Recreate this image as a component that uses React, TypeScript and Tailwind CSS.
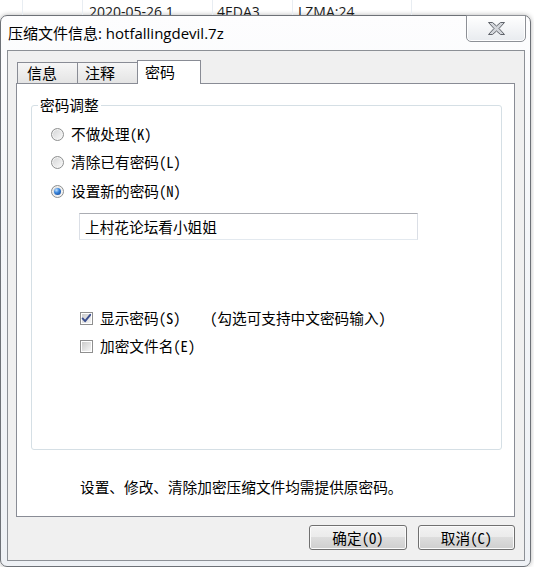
const sim =
	"font-['Noto_Sans_Mono_CJK_SC','Noto_Sans_CJK_SC',monospace] text-[14.67px] leading-[16px] text-black";

function Radio({ label, checked }: { label: string; checked?: boolean }) {
	return (
		<div className="flex h-[28px] items-center pl-[19px]">
			<span className="flex h-[13px] w-[13px] shrink-0 items-center justify-center rounded-full border border-[#8e9090] bg-[linear-gradient(135deg,#d2d3d4,#fbfbfb)] shadow-[inset_0_0_0_1px_#f4f4f4]">
				{checked && (
					<span className="h-[7px] w-[7px] rounded-full bg-[radial-gradient(circle_at_35%_30%,#c4e2ff_0%,#3a86dc_40%,#0c3c8c_100%)]" />
				)}
			</span>
			<span className="ml-[7px] whitespace-pre">{label}</span>
		</div>
	);
}

function Check({ checked }: { checked?: boolean }) {
	return (
		<span className="flex h-[13px] w-[13px] shrink-0 border border-[#8f8f8f] bg-white p-px">
			<span className="flex h-full w-full items-center justify-center overflow-visible bg-[linear-gradient(135deg,#cbcbcb,#f6f6f6)]">
				{checked && (
					<svg width="11" height="11" viewBox="0 0 11 11" className="overflow-visible">
						<path
							d="M1.6 5.4 L4.1 8.2 L9.2 1.8"
							fill="none"
							stroke="#3b4f8f"
							strokeWidth="1.9"
							strokeLinecap="round"
							strokeLinejoin="round"
						/>
					</svg>
				)}
			</span>
		</span>
	);
}

function Button({ children, w }: { children: string; w: string }) {
	return (
		<button
			type="button"
			className={`${w} flex h-[25px] items-center justify-center rounded-[3px] border border-[#707070] bg-[linear-gradient(#f2f2f2_0%,#ebebeb_49%,#dddddd_50%,#cfcfcf_100%)] shadow-[inset_0_0_0_1px_#fbfbfb] ${sim}`}
		>
			{children}
		</button>
	);
}

export default function App() {
	return (
		<div className="h-[567px] w-[534px] overflow-hidden bg-white">
			{/* list behind the dialog, cut by the window's top edge */}
			<div className="flex h-[15px] overflow-hidden whitespace-nowrap font-['Segoe_UI','Open_Sans',sans-serif] text-[14px] leading-[16px] text-[#1b1b1b]">
				<div className="w-[23px] shrink-0 border-r border-[#e8edf2]" />
				<div className="w-[60px] shrink-0 border-r border-[#e8edf2]" />
				<div className="w-[130px] shrink-0 border-r border-[#e8edf2] pl-[6px] pt-[4px]">2020-05-26 1</div>
				<div className="w-[80px] shrink-0 border-r border-[#e8edf2] pl-[4px] pt-[4px]">4EDA3</div>
				<div className="w-[119px] shrink-0 border-r border-[#e8edf2] pl-[5px] pt-[4px]">LZMA:24</div>
				<div className="flex-1" />
			</div>

			{/* dialog window */}
			<div className="flex h-[552px] w-[531px] flex-col rounded-[7px] border border-[#6d7177] bg-[linear-gradient(180deg,#fdfdfe_0%,#f4f6f9_40%,#eef1f5_100%)] shadow-[0_0_5px_rgba(0,0,0,0.3)]">
				<div className="flex h-[34px] shrink-0 items-start justify-between">
					<div className="pl-[7px] pt-[8px] font-['Segoe_UI','Open_Sans','Noto_Sans_CJK_SC',sans-serif] text-[15px] leading-[18px] text-black">
						压缩文件信息: hotfallingdevil.7z
					</div>
					<div className="-mt-px mr-[4px] flex h-[27px] w-[60px] items-center justify-center rounded-b-[5px] border border-[#8d9096] bg-[linear-gradient(#ffffff,#e8ebef)] shadow-[inset_0_0_0_1px_rgba(255,255,255,0.9)]">
						<svg width="17" height="13" viewBox="0 0 17 13">
							<polygon
								points="0.5,0.5 4.5,0.5 8.5,4 12.5,0.5 16.5,0.5 11,6.5 16.5,12.5 12.5,12.5 8.5,9 4.5,12.5 0.5,12.5 6,6.5"
								fill="#d3d6db"
								stroke="#5f636a"
								strokeWidth="1"
								strokeLinejoin="round"
							/>
						</svg>
					</div>
				</div>

				<div className="mb-[5px] ml-[6px] mr-[5px] flex flex-1 flex-col border border-[#8c9096] bg-[#f0f0f0] pl-[8px] pr-[9px] pt-[9px]">
					{/* tabs */}
					<div className="flex h-[23px] items-end pl-[1px] font-['Noto_Sans_CJK_SC',sans-serif] text-[15px] leading-[18px] text-black">
						<div className="flex h-[21px] w-[61px] items-center border-l border-r border-t border-[#898c95] bg-[linear-gradient(#f6f6f6,#e4e4e4)] pl-[9px]">
							信息
						</div>
						<div className="flex h-[21px] w-[60px] items-center border-r border-t border-[#898c95] bg-[linear-gradient(#f6f6f6,#e4e4e4)] pl-[7px]">
							注释
						</div>
						<div className="relative z-10 -mb-px -ml-px flex h-[24px] w-[64px] items-center border-l border-r border-t border-[#898c95] bg-white pb-[2px] pl-[7px]">
							密码
						</div>
					</div>

					{/* tab panel */}
					<div className={`flex h-[434px] flex-col border border-[#898c95] bg-white ${sim}`}>
						<fieldset className="ml-[14px] mr-[12px] mt-[13px] h-[353px] rounded-[3px] border border-[#d5dfe5] p-0">
							<legend className="ml-[6px] px-[2px] leading-[16px]">密码调整</legend>
							<div className="pt-[7px]">
								<Radio label="不做处理(K)" />
								<Radio label="清除已有密码(L)" />
								<div className="mt-[1px]">
									<Radio label="设置新的密码(N)" checked />
								</div>
							</div>
							<div className="ml-[47px] mt-[8px] flex h-[27px] w-[339px] items-center border border-b-[#e3e9ef] border-l-[#dbdfe6] border-r-[#dbdfe6] border-t-[#abadb3] pl-[5px]">
								上村花论坛看小姐姐
							</div>
							<div className="mt-[64px] flex h-[28px] items-center pl-[48px]">
								<div className="flex w-[130px] items-center">
									<Check checked />
									<span className="ml-[7px]">显示密码(S)</span>
								</div>
								<span>(勾选可支持中文密码输入)</span>
							</div>
							<div className="flex h-[28px] items-center pl-[48px]">
								<Check />
								<span className="ml-[7px]">加密文件名(E)</span>
							</div>
						</fieldset>
						<div className="ml-[63px] mt-[29px]">设置、修改、清除加密压缩文件均需提供原密码。</div>
					</div>

					{/* buttons */}
					<div className="mt-[8px] flex justify-end gap-[11px]">
						<Button w="w-[98px]">确定(O)</Button>
						<Button w="w-[97px]">取消(C)</Button>
					</div>
				</div>
			</div>
		</div>
	);
}
